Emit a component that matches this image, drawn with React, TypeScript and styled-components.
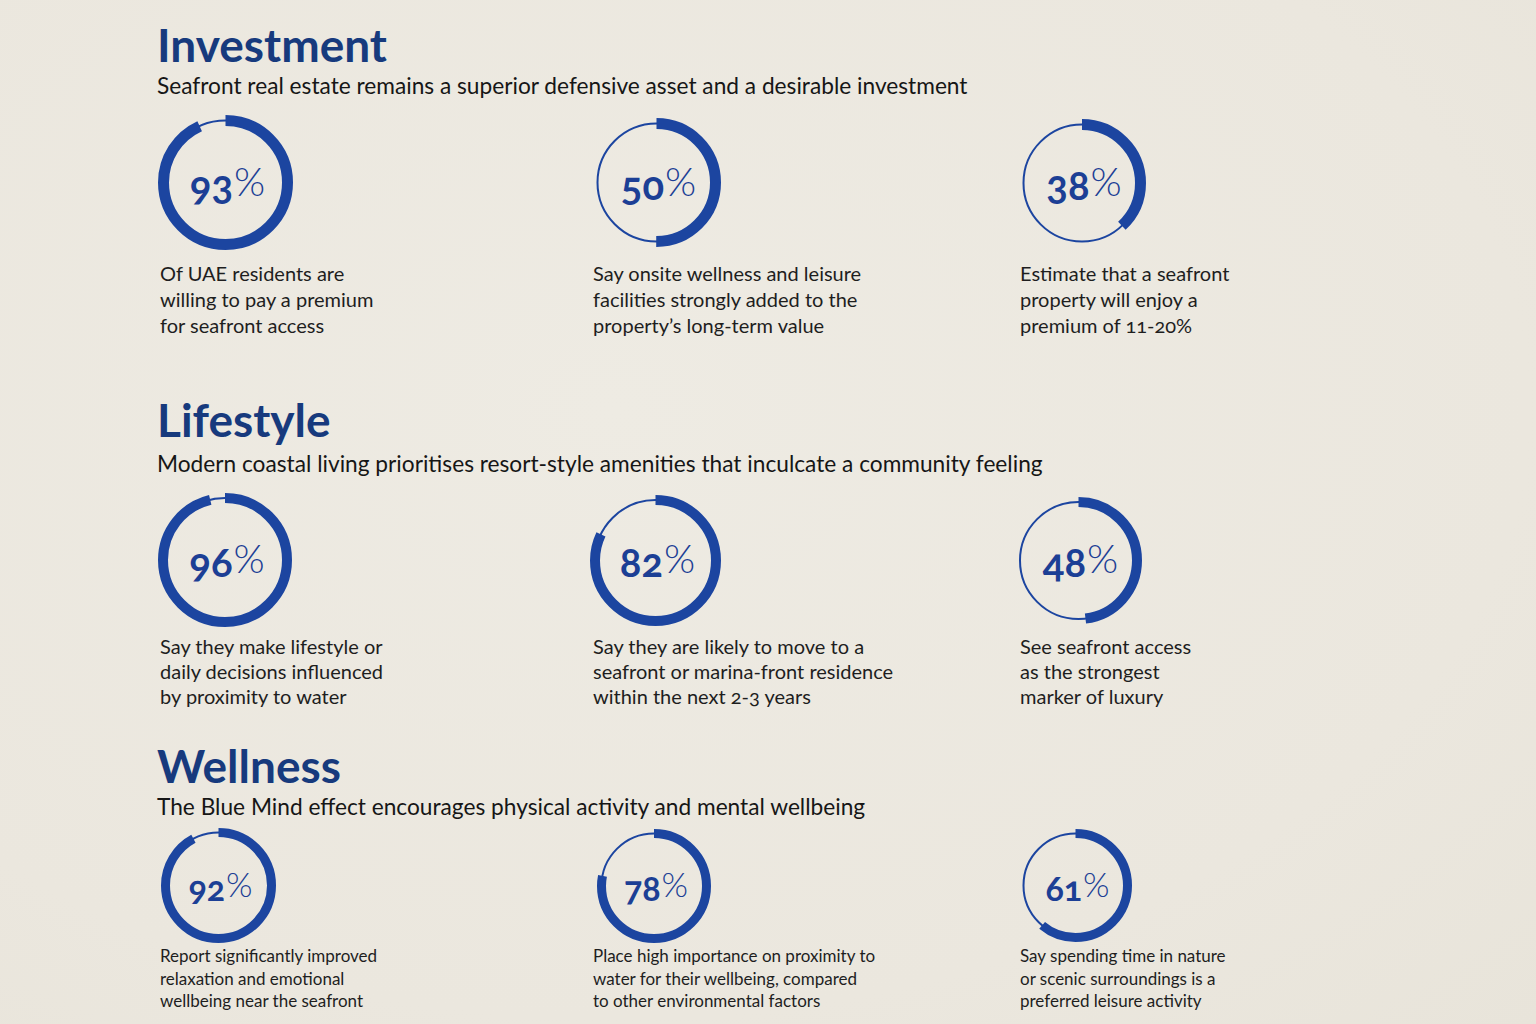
import React from 'react';
import styled, {createGlobalStyle} from 'styled-components';

const GlobalStyle = createGlobalStyle`
  html, body {
    margin: 0;
    padding: 0;
  }
  body {
    background: #ece8df;
    font-family: Lato, "Open Sans", sans-serif;
    color: #1c1c1c;
  }
`;

const Page = styled.main`
  width: 1536px;
  height: 1024px;
  box-sizing: border-box;
  overflow: hidden;
  padding: 18px 0 0 157px;
  background: radial-gradient(ellipse at 40% 40%, #eeebe3 0%, #ebe7de 70%, #e8e4da 100%);
`;

const Section = styled.section<{ $top: number }>`
  margin-top: ${p => p.$top}px;
`;

const Heading = styled.h2`
  margin: 0;
  font-size: 46px;
  line-height: 54px;
  font-weight: 700;
  color: #173a7d;
`;

const Subtitle = styled.p<{ $gap: number }>`
  margin: ${p => p.$gap}px 0 0;
  font-size: 22.7px;
  line-height: 28px;
  color: #161616;
`;

const StatGrid = styled.div<{ $gap: number }>`
  display: grid;
  grid-template-columns: 433px 427px 1fr;
  margin-top: ${p => p.$gap}px;
`;

const Stat = styled.div`
  display: flex;
  flex-direction: column;
  align-items: flex-start;
`;

const RingWrap = styled.div<{ $height: number; $shift: number }>`
  display: grid;
  place-items: center;
  height: ${p => p.$height}px;
  margin-left: ${p => p.$shift}px;

  & > * {
    grid-area: 1 / 1;
  }
`;

const Figure = styled.div<{ $size: number }>`
  display: flex;
  align-items: flex-start;
  color: #1c3f95;
  font-size: ${p => p.$size}px;
  line-height: 1;
  padding: 0.12em 0 0 4px;
`;

const Digits = styled.span`
  font-weight: 700;
  font-variant-numeric: oldstyle-nums;
  font-feature-settings: "onum" 1;
`;

const Percent = styled.span`
  font-weight: 300;
  font-size: 1em;
  margin-top: -0.1em;
  margin-left: 1px;
`;

const Description = styled.p<{ $size: number; $line: number; $gap: number }>`
  margin: ${p => p.$gap}px 0 0 3px;
  font-size: ${p => p.$size}px;
  line-height: ${p => p.$line}px;
  color: #1e1e1e;
  font-variant-numeric: oldstyle-nums;
`;

type Item = { value: number; size: number; shift: number; text: string[] };

type Block = {
    title: string;
    subtitle: string;
    top: number;
    subGap: number;
    ringGap: number;
    ringHeight: number;
    textGap: number;
    fontSize: number;
    lineHeight: number;
    figureSize: number;
    stroke: number;
    items: Item[];
};

const blocks: Block[] = [
    {
        title: 'Investment',
        subtitle: 'Seafront real estate remains a superior defensive asset and a desirable investment',
        top: 0,
        subGap: 0,
        ringGap: 15,
        ringHeight: 135,
        textGap: 10,
        fontSize: 20,
        lineHeight: 26,
        figureSize: 40,
        stroke: 11,
        items: [
            {value: 93, size: 135, shift: 1, text: ['Of UAE residents are', 'willing to pay a premium', 'for seafront access']},
            {value: 50, size: 129, shift: 2, text: ['Say onsite wellness and leisure', 'facilities strongly added to the', 'property\u2019s long-term value']},
            {value: 38, size: 128, shift: 1, text: ['Estimate that a seafront', 'property will enjoy a', 'premium of 11-20%']},
        ],
    },
    {
        title: 'Lifestyle',
        subtitle: 'Modern coastal living prioritises resort-style amenities that inculcate a community feeling',
        top: 55,
        subGap: 3,
        ringGap: 15,
        ringHeight: 134,
        textGap: 7,
        fontSize: 20,
        lineHeight: 25,
        figureSize: 40,
        stroke: 10,
        items: [
            {value: 96, size: 134, shift: 1, text: ['Say they make lifestyle or', 'daily decisions influenced', 'by proximity to water']},
            {value: 82, size: 131, shift: 0, text: ['Say they are likely to move to a', 'seafront or marina-front residence', 'within the next 2-3 years']},
            {value: 48, size: 127, shift: -2, text: ['See seafront access', 'as the strongest', 'marker of luxury']},
        ],
    },
    {
        title: 'Wellness',
        subtitle: 'The Blue Mind effect encourages physical activity and mental wellbeing',
        top: 30,
        subGap: 0,
        ringGap: 7,
        ringHeight: 115,
        textGap: 2,
        fontSize: 17,
        lineHeight: 22.5,
        figureSize: 34,
        stroke: 9,
        items: [
            {value: 92, size: 115, shift: 4, text: ['Report significantly improved', 'relaxation and emotional', 'wellbeing near the seafront']},
            {value: 78, size: 114, shift: 7, text: ['Place high importance on proximity to', 'water for their wellbeing, compared', 'to other environmental factors']},
            {value: 61, size: 113, shift: 2, text: ['Say spending time in nature', 'or scenic surroundings is a', 'preferred leisure activity']},
        ],
    },
];

const Ring = ({value, size, stroke}: { value: number; size: number; stroke: number }) => {
    const c = size / 2;
    const r = c - stroke / 2;
    const length = 2 * Math.PI * r;
    return (
        <svg width={size} height={size} viewBox={`0 0 ${size} ${size}`}>
            <circle cx={c} cy={c} r={r} fill="none" stroke="#1c45a0" strokeWidth={2}/>
            <circle
                cx={c}
                cy={c}
                r={r}
                fill="none"
                stroke="#1c45a0"
                strokeWidth={stroke}
                strokeDasharray={`${(length * value) / 100} ${length}`}
                transform={`rotate(-90 ${c} ${c})`}
            />
        </svg>
    );
};

export default function App() {
    return (
        <>
            <GlobalStyle/>
            <Page>
                {blocks.map(block => (
                    <Section key={block.title} $top={block.top}>
                        <Heading>{block.title}</Heading>
                        <Subtitle $gap={block.subGap}>{block.subtitle}</Subtitle>
                        <StatGrid $gap={block.ringGap}>
                            {block.items.map(item => (
                                <Stat key={item.value}>
                                    <RingWrap $height={block.ringHeight} $shift={item.shift}>
                                        <Ring value={item.value} size={item.size} stroke={block.stroke}/>
                                        <Figure $size={block.figureSize}>
                                            <Digits>{item.value}</Digits>
                                            <Percent>%</Percent>
                                        </Figure>
                                    </RingWrap>
                                    <Description
                                        $size={block.fontSize}
                                        $line={block.lineHeight}
                                        $gap={block.textGap}
                                    >
                                        {item.text.map(line => (
                                            <React.Fragment key={line}>
                                                {line}
                                                <br/>
                                            </React.Fragment>
                                        ))}
                                    </Description>
                                </Stat>
                            ))}
                        </StatGrid>
                    </Section>
                ))}
            </Page>
        </>
    );
}
